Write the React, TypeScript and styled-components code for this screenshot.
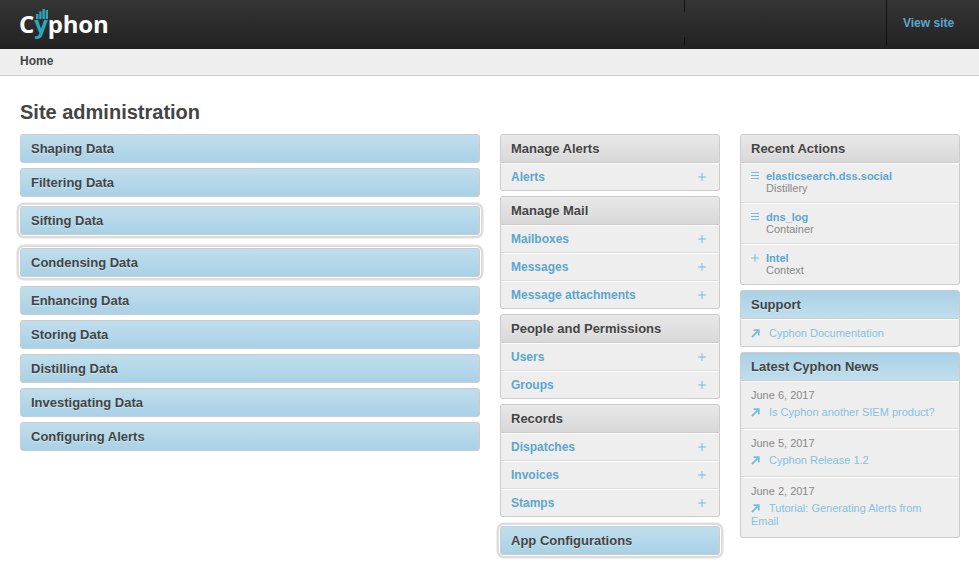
import { FC } from 'react';
import styled, { createGlobalStyle, css } from 'styled-components';

const GlobalStyle = createGlobalStyle`
  html, body {
    margin: 0;
    padding: 0;
    background: #fff;
    font-family: "Liberation Sans", Arial, sans-serif;
    color: #444;
  }
  * {
    box-sizing: border-box;
  }
`;

const blueDown = 'linear-gradient(#c0deed, #a9d1e6)';
const blueUp = 'linear-gradient(#a9d1e6, #c0deed)';
const grey = 'linear-gradient(#e8e8e8, #d8d8d8)';

const Page = styled.div`
  width: 979px;
  height: 576px;
  overflow: hidden;
`;

const Header = styled.header`
  height: 49px;
  padding: 0 25px 3px 20px;
  display: flex;
  justify-content: space-between;
  background: linear-gradient(#353535, #222);
`;

const Logo = styled.div`
  position: relative;
  height: 46px;
  padding-top: 7px;
  font-family: "Open Sans", sans-serif;
  font-weight: 700;
  font-size: 24px;
  line-height: 34px;
  letter-spacing: -0.15px;
  margin-left: -1px;
  color: #fff;

  svg {
    position: absolute;
    left: 17px;
    top: 9px;
  }
`;

const LogoY = styled.span`
  color: #2ba6bd;
`;

const Nav = styled.nav`
  display: flex;
  height: 46px;
`;

const UserBlock = styled.div`
  width: 202px;
  background: linear-gradient(#111 0 12px, transparent 12px 37px, #111 37px) left / 1px 100% no-repeat;
`;

const SiteLink = styled.a`
  width: 68px;
  padding-left: 16px;
  border-left: 1px solid #111;
  font-size: 12px;
  font-weight: 700;
  line-height: 46px;
  white-space: nowrap;
  color: #5ba6cf;
`;

const Crumbs = styled.div`
  height: 27px;
  padding: 0 20px;
  background: #eee;
  border-bottom: 1px solid #ccc;
  font-size: 12px;
  font-weight: 700;
  line-height: 25px;
  color: #444;
`;

const Title = styled.h1`
  margin: 0;
  padding: 24px 20px 0;
  height: 58px;
  font-size: 20px;
  font-weight: 700;
  line-height: 24px;
  color: #444;
`;

const Columns = styled.main`
  display: grid;
  grid-template-columns: 460px 220px 220px;
  column-gap: 20px;
  align-items: start;
  padding: 0 20px;
`;

const Stack = styled.div`
  display: flex;
  flex-direction: column;
  gap: 5px;
`;

const Group = styled.section<{ $focus?: boolean }>`
  ${({ $focus }) =>
    $focus &&
    css`
      margin: 4px 0;
      box-shadow: 0 0 0 1px #fff, 0 0 0 3.5px #ddd;
      border-radius: 4px;
    `}
`;

const GroupTitle = styled.h2<{ $tone: 'down' | 'up' | 'grey'; $single?: boolean }>`
  margin: 0;
  height: 29px;
  padding: 0 10px;
  border: 1px solid #ccc;
  border-radius: ${({ $single }) => ($single ? '3px' : '3px 3px 0 0')};
  background: ${({ $tone }) => ($tone === 'down' ? blueDown : $tone === 'up' ? blueUp : grey)};
  font-size: 13px;
  font-weight: 700;
  line-height: 27px;
  text-shadow: 0 1px 0 rgba(255, 255, 255, 0.4);
  color: #444;
`;

const Body = styled.div`
  background: #eee;
  border: 1px solid #ccc;
  border-top: 0;
  border-radius: 0 0 3px 3px;
`;

const Row = styled.div`
  display: flex;
  justify-content: space-between;
  height: 28px;
  padding: 0 13px 0 10px;
  border-top: 1px solid #fff;
  border-bottom: 1px solid #ddd;
  font-size: 12px;
  font-weight: 700;
  line-height: 27px;
  color: #5ba6cf;

  &:last-child {
    height: 27px;
    border-bottom: 0;
  }
`;

const Plus = styled.span`
  display: flex;
  align-items: center;
  color: #7ab8da;
`;

const Action = styled.div`
  display: grid;
  grid-template-columns: 15px 1fr;
  height: 41px;
  padding: 7px 10px 0 10px;
  border-top: 1px solid #fff;
  border-bottom: 1px solid #ddd;

  &:first-child {
    height: 40px;
    padding-top: 6px;
  }

  &:last-child {
    height: 40px;
    border-bottom: 0;
  }
`;

const ActionIcon = styled.span`
  padding-top: 2px;
  line-height: 0;
  color: #7ab8da;
`;

const ActionName = styled.div`
  font-size: 11px;
  font-weight: 700;
  line-height: 12px;
  color: #5ba6cf;
`;

const ActionKind = styled.div`
  font-size: 11px;
  line-height: 12px;
  color: #888;
`;

const NewsItem = styled.div`
  padding: 7px 10px 9px;
  border-top: 1px solid #fff;
  border-bottom: 1px solid #ddd;

  &:last-child {
    border-bottom: 0;
  }
`;

const NewsDate = styled.div`
  margin-bottom: 4px;
  font-size: 11px;
  line-height: 13px;
  color: #888;
`;

const ExtLink = styled.a`
  display: block;
  font-size: 11px;
  line-height: 13px;
  color: #84c2e0;

  svg {
    margin: 0 9px 0 0;
    vertical-align: -1px;
  }
`;

const SupportRow = styled.div`
  height: 27px;
  padding: 7px 10px 0;
  border-top: 1px solid #fff;
`;

const PlusIcon: FC = () => (
  <svg width="8" height="8" viewBox="0 0 8 8" stroke="currentColor" strokeWidth="1" fill="none">
    <path d="M0 4h8M4 0v8" />
  </svg>
);

const ListIcon: FC = () => (
  <svg width="8" height="8" viewBox="0 0 8 8" stroke="currentColor" strokeWidth="1" fill="none">
    <path d="M0 .5h8M0 3.5h8M0 6.5h8" />
  </svg>
);

const ArrowIcon: FC = () => (
  <svg width="9" height="9" viewBox="0 0 9 9" fill="none" stroke="#7fbcdc" strokeWidth="1.8">
    <path d="M1 8L7.5 1.5M2.5 1.2H7.8V6.5" />
  </svg>
);

const dataGroups: { name: string; focus?: boolean }[] = [
  { name: 'Shaping Data' },
  { name: 'Filtering Data' },
  { name: 'Sifting Data', focus: true },
  { name: 'Condensing Data', focus: true },
  { name: 'Enhancing Data' },
  { name: 'Storing Data' },
  { name: 'Distilling Data' },
  { name: 'Investigating Data' },
  { name: 'Configuring Alerts' },
];

const manageGroups = [
  { name: 'Manage Alerts', rows: ['Alerts'] },
  { name: 'Manage Mail', rows: ['Mailboxes', 'Messages', 'Message attachments'] },
  { name: 'People and Permissions', rows: ['Users', 'Groups'] },
  { name: 'Records', rows: ['Dispatches', 'Invoices', 'Stamps'] },
];

const actions = [
  { name: 'elasticsearch.dss.social', kind: 'Distillery', added: false },
  { name: 'dns_log', kind: 'Container', added: false },
  { name: 'Intel', kind: 'Context', added: true },
];

const news = [
  { date: 'June 6, 2017', title: 'Is Cyphon another SIEM product?' },
  { date: 'June 5, 2017', title: 'Cyphon Release 1.2' },
  { date: 'June 2, 2017', title: 'Tutorial: Generating Alerts from Email' },
];

export default function App() {
  return (
    <Page>
      <GlobalStyle />
      <Header>
        <Logo>
          C<LogoY>y</LogoY>phon
          <svg width="12" height="10" viewBox="0 0 12 10" fill="#2ba6bd">
            <rect x="0" y="5" width="2.4" height="5" />
            <rect x="3.2" y="2.5" width="2.4" height="7.5" />
            <rect x="6.4" y="0" width="2.4" height="10" />
            <rect x="9.6" y="1" width="2.4" height="9" />
          </svg>
        </Logo>
        <Nav>
          <UserBlock />
          <SiteLink>View site</SiteLink>
        </Nav>
      </Header>
      <Crumbs>Home</Crumbs>
      <Title>Site administration</Title>
      <Columns>
        <Stack>
          {dataGroups.map((g) => (
            <Group key={g.name} $focus={g.focus}>
              <GroupTitle $tone="down" $single>
                {g.name}
              </GroupTitle>
            </Group>
          ))}
        </Stack>
        <Stack>
          {manageGroups.map((g) => (
            <Group key={g.name}>
              <GroupTitle $tone="grey">{g.name}</GroupTitle>
              <Body>
                {g.rows.map((r) => (
                  <Row key={r}>
                    {r}
                    <Plus>
                      <PlusIcon />
                    </Plus>
                  </Row>
                ))}
              </Body>
            </Group>
          ))}
          <Group $focus>
            <GroupTitle $tone="down" $single>
              App Configurations
            </GroupTitle>
          </Group>
        </Stack>
        <Stack>
          <Group>
            <GroupTitle $tone="grey">Recent Actions</GroupTitle>
            <Body>
              {actions.map((a) => (
                <Action key={a.name}>
                  <ActionIcon>{a.added ? <PlusIcon /> : <ListIcon />}</ActionIcon>
                  <div>
                    <ActionName>{a.name}</ActionName>
                    <ActionKind>{a.kind}</ActionKind>
                  </div>
                </Action>
              ))}
            </Body>
          </Group>
          <Group>
            <GroupTitle $tone="up">Support</GroupTitle>
            <Body>
              <SupportRow>
                <ExtLink>
                  <ArrowIcon />
                  Cyphon Documentation
                </ExtLink>
              </SupportRow>
            </Body>
          </Group>
          <Group>
            <GroupTitle $tone="up">Latest Cyphon News</GroupTitle>
            <Body>
              {news.map((n) => (
                <NewsItem key={n.date}>
                  <NewsDate>{n.date}</NewsDate>
                  <ExtLink>
                    <ArrowIcon />
                    {n.title}
                  </ExtLink>
                </NewsItem>
              ))}
            </Body>
          </Group>
        </Stack>
      </Columns>
    </Page>
  );
}
